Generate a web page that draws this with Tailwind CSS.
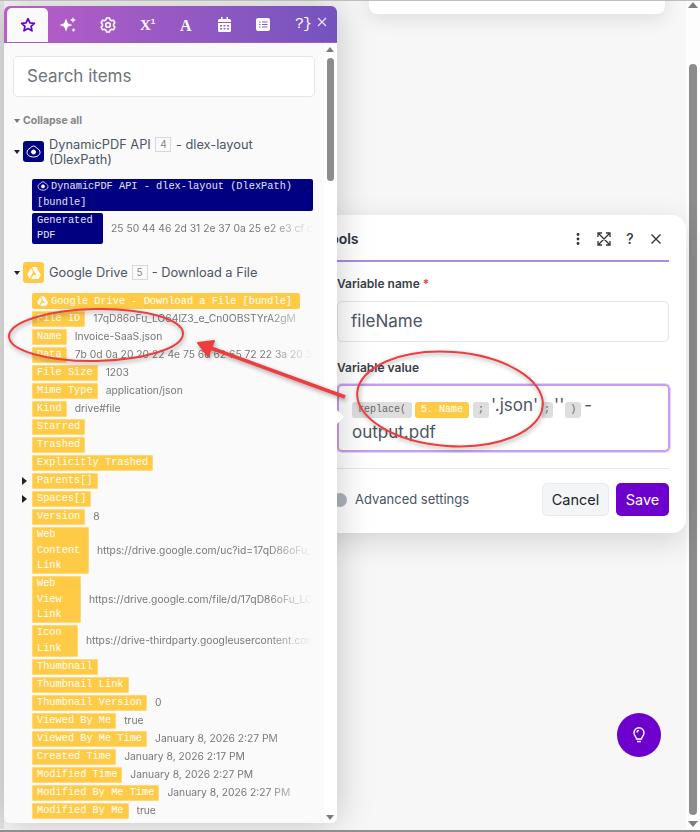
<!DOCTYPE html>
<html lang="en">
<head>
    <meta charset="UTF-8">
    <title>Set variable</title>
    <script src="https://cdn.jsdelivr.net/npm/@tailwindcss/browser@4"></script>
</head>
<body class="bg-[#f7f7f7]">
<div class="relative w-[700px] h-[832px] overflow-hidden bg-[#f7f7f7] font-['Inter',sans-serif]">

    <!-- top card behind -->
    <div class="absolute left-[369px] top-[-20px] w-[296px] h-[34px] bg-white rounded-[8px] shadow-[0_6px_18px_rgba(0,0,0,0.10)]">
        <div class="flex gap-[23px] pl-[11px] mt-[17px]">
            <div class="w-[126px] h-[4px] rounded-b-[4px] border border-[#cfd8de]"></div>
            <div class="w-[81px] h-[4px] rounded-b-[4px] border border-[#cfd8de]"></div>
            <div class="w-[31px] h-[4px] rounded-b-[4px] border border-[#cfd8de]"></div>
        </div>
    </div>

    <!-- page scrollbar -->
    <div class="absolute right-0 top-0 bottom-0 w-[14px] bg-[#fdfdfd]">
        <div class="absolute left-[2px] top-[2px] w-0 h-0 border-x-[5px] border-x-transparent border-b-[6px] border-b-[#7d7d7d]"></div>
        <div class="absolute left-[3px] top-[64px] w-[8px] h-[751px] rounded-[4px] bg-[#8c8c8c]"></div>
        <div class="absolute left-[2px] top-[821px] w-0 h-0 border-x-[5px] border-x-transparent border-t-[6px] border-t-[#7d7d7d]"></div>
    </div>

    <!-- modal -->
    <div class="absolute left-[300px] top-[215px] w-[386px] h-[318px] bg-white rounded-[14px] shadow-[0_8px_30px_rgba(0,0,0,0.14)]">
        <div class="flex items-center h-[47px] pl-[22px] pr-[6px] mr-[17px] pt-[2px] border-b-2 border-[#a88ce0]">
            <span class="text-[14px] font-semibold text-[#2a2f36]">Tools</span>
            <div class="ml-auto flex items-center gap-[12px] text-[#2f343a]">
                <svg width="14" height="14" viewBox="0 0 14 14" fill="currentColor"><circle cx="7" cy="2.5" r="1.4"/><circle cx="7" cy="7" r="1.4"/><circle cx="7" cy="11.5" r="1.4"/></svg>
                <svg width="14" height="14" viewBox="0 0 14 14" fill="none" stroke="currentColor" stroke-width="1.3"><path d="M1 5V1h4M9 1h4v4M13 9v4H9M5 13H1V9M2 2l10 10M12 2L2 12"/></svg>
                <span class="w-[14px] text-center text-[14px] font-medium leading-none">?</span>
                <svg width="14" height="14" viewBox="0 0 14 14" fill="none" stroke="currentColor" stroke-width="1.4"><path d="M2.5 2.5l9 9M11.5 2.5l-9 9"/></svg>
            </div>
        </div>
        <div class="pl-[37px] pr-[17px]">
            <div class="mt-[14px] text-[12px] leading-[15px] font-semibold text-[#3a4048]">Variable name <span class="text-[#ef3b3b]">*</span></div>
            <div class="mt-[10px] h-[41px] border border-[#e3e5e8] rounded-[5px] flex items-center px-[13px] text-[17px] text-[#4b5563]">fileName</div>
            <div class="mt-[18px] text-[12px] leading-[15px] font-semibold text-[#3a4048]">Variable value</div>
            <div class="mt-[9px] h-[68px] -mr-[1px] border-2 border-[#c79df0] rounded-[5px] shadow-[0_0_0_1px_#e6d5f8] px-[13px] pt-[6px] text-[17px] leading-[27px] text-[#4b5563]">
                <span class="inline-block align-[-1px] h-[16px] px-[6px] mr-[3px] rounded-[3px] bg-[#dedede] font-['Liberation_Mono',monospace] text-[10px] leading-[16px] text-[#666]">replace(</span><span class="inline-block align-[-1px] h-[16px] px-[6px] mr-[4px] rounded-[3px] bg-[#ffcb47] font-['Liberation_Mono',monospace] text-[10px] leading-[16px] text-white">5. Name</span><span class="inline-block align-[-1px] h-[16px] px-[5px] mr-[2px] rounded-[3px] bg-[#dedede] font-['Liberation_Mono',monospace] text-[10px] leading-[16px] text-[#666]">;</span>'.json'<span class="inline-block align-[-1px] h-[16px] px-[3px] ml-[3px] mr-[1px] rounded-[3px] bg-[#dedede] font-['Liberation_Mono',monospace] text-[10px] leading-[16px] text-[#666]">;</span>''<span class="inline-block align-[-1px] h-[16px] px-[5px] ml-[1px] mr-[3px] rounded-[3px] bg-[#dedede] font-['Liberation_Mono',monospace] text-[10px] leading-[16px] text-[#666]">)</span>-<br>output.pdf
            </div>
            <div class="mt-[16px] border-t border-[#e5e7eb]"></div>
            <div class="mt-[14px] flex items-center">
                <span class="-ml-[4px] w-[14px] h-[14px] rounded-full bg-[#adb5bd]"></span>
                <span class="ml-[8px] text-[13px] text-[#4b5563]">Advanced settings</span>
                <span class="ml-auto h-[33px] w-[67px] flex items-center justify-center rounded-[5px] bg-[#f3f5f7] border border-[#e8ebee] text-[14.5px] text-[#212529]">Cancel</span>
                <span class="ml-[7px] h-[33px] w-[53px] flex items-center justify-center rounded-[5px] bg-[#6d00cc] text-[14.5px] text-white">Save</span>
            </div>
        </div>
    </div>

    <!-- help button -->
    <div class="absolute left-[617px] top-[713px] w-[44px] h-[44px] rounded-full bg-[#6d00cc] flex items-center justify-center">
        <svg width="16" height="18" viewBox="0 0 16 18" fill="none" stroke="white" stroke-width="1.4"><path d="M5.5 13c0-2-2.5-3-2.5-6.2a5 5 0 0 1 10 0C13 10 10.500 11 10.500 13zM6 15.500h4"/><path d="M6 6.500A2 2 0 0 1 8 4.500"/></svg>
    </div>

    <!-- items panel -->
    <div class="absolute left-0 top-0 h-[829px] w-[4px] bg-[#e4e4e4]"></div>
    <div class="absolute left-[4px] top-[6px] w-[333px] h-[817px] bg-[#fafafa] rounded-[6px] overflow-hidden shadow-[0_0_36px_rgba(0,0,0,0.22)]">
        <!-- tabs -->
        <div class="relative flex items-end h-[37px] pl-[3px] bg-linear-to-r from-[#bb5dc7] to-[#7453bf] border-b border-[#a45cc4]">
            <div class="w-[41px] h-[34px] bg-[#fafafa] rounded-t-[5px] flex items-center justify-center">
                <svg width="16" height="16" viewBox="0 0 24 24" fill="none" stroke="#6d00cc" stroke-width="2.600" stroke-linejoin="round"><path d="M12 2.500l2.900 6.200 6.700.8-5 4.600 1.400 6.700L12 17.400l-6 3.400 1.400-6.700-5-4.600 6.700-.8z"/></svg>
            </div>
            <div class="absolute left-0 top-0 bottom-0 right-0 text-white">
                <svg class="absolute left-[55px] top-[11px]" width="18" height="16" viewBox="0 0 18 16" fill="white"><path d="M7 1.500l1.800 4.700 4.700 1.800-4.700 1.800L7 14.500 5.200 9.800.5 8l4.700-1.800z"/><path d="M14 0l.9 2.100 2.100.9-2.100.9-.9 2.100-.9-2.100-2.100-.9 2.100-.9zM14.500 11l.7 1.300 1.300.7-1.300.7-.7 1.300-.7-1.300-1.300-.7 1.300-.7z"/></svg>
                <svg class="absolute left-[96px] top-[11px]" width="16" height="16" viewBox="0 0 16 16" fill="none" stroke="white" stroke-width="1.600" stroke-linejoin="round"><path d="M6.500 1h3l.5 1.800 1.600.9 1.800-.5 1.500 2.600-1.300 1.300v1.800l1.300 1.300-1.500 2.600-1.800-.5-1.600.9-.5 1.800h-3L6 13.200l-1.600-.9-1.800.5-1.500-2.600 1.300-1.300V7.100L1.100 5.800l1.500-2.600 1.800.5L6 2.800z"/><circle cx="8" cy="8" r="2.300"/></svg>
                <span class="absolute left-[136px] top-[9px] text-[15px] leading-[20px] font-['Liberation_Serif',serif] font-bold">X<sup class="text-[8px] top-[-6px] font-['Liberation_Sans',sans-serif]">1</sup></span>
                <span class="absolute left-[176px] top-[10px] text-[16px] leading-[20px] font-['Liberation_Serif',serif] font-bold">A</span>
                <svg class="absolute left-[214px] top-[11px]" width="13" height="15" viewBox="0 0 13 15" fill="white"><path d="M3 0h1.500v2h4V0H10v2h1.500A1.500 1.500 0 0 1 13 3.500V5H0V3.500A1.500 1.500 0 0 1 1.500 2H3zM0 6h13v7.500a1.500 1.500 0 0 1-1.500 1.500h-10A1.500 1.500 0 0 1 0 13.500z"/><path d="M2 8h2v1.500H2zM5.500 8h2v1.500h-2zM9 8h2v1.500H9zM2 11h2v1.500H2zM5.500 11h2v1.500h-2zM9 11h2v1.500H9z" fill="#9a63c8"/></svg>
                <svg class="absolute left-[252px] top-[12px]" width="14" height="13" viewBox="0 0 14 13" fill="white"><rect width="14" height="13" rx="2"/><path d="M3 3.500h1.500v1H3zM6 3.500h5.500v1H6zM3 6h1.500v1H3zM6 6h5.500v1H6zM3 8.500h1.500v1H3zM6 8.500h5.500v1H6z" fill="#8a5ac5"/></svg>
                <span class="absolute left-[291px] top-[10px] text-[15px] leading-[18px] font-['Liberation_Mono',monospace] tracking-[-1px]">?}</span>
                <svg class="absolute left-[313px] top-[11px]" width="10" height="10" viewBox="0 0 10 10" fill="none" stroke="white" stroke-opacity="0.85" stroke-width="1.200"><path d="M1 1l8 8M9 1l-8 8"/></svg>
            </div>
        </div>

        <!-- search -->
        <div class="ml-[9px] mt-[13px] w-[302px] h-[41px] bg-white border border-[#e3e5e8] rounded-[5px] flex items-center px-[13px] text-[17px] text-[#6c757d]">Search items</div>

        <div class="ml-[10px] mt-[17px] flex items-center text-[10.500px] leading-[14px] font-bold text-[#868686]">
            <span class="w-0 h-0 border-x-[3px] border-x-transparent border-t-[4px] border-t-[#777] mr-[3px]"></span>Collapse all
        </div>

        <!-- dynamicpdf module -->
        <div class="relative mt-[9px] pl-[45px] pr-[20px] text-[12.800px] leading-[15px] text-[#4b5563] h-[30px]">
            <span class="absolute left-[10px] top-[13px] w-0 h-0 border-x-[3.500px] border-x-transparent border-t-[4px] border-t-[#222]"></span>
            <span class="absolute left-[19px] top-[4px] w-[21px] h-[21px] rounded-[3px] bg-[#000080] flex items-center justify-center">
                <svg width="15" height="13" viewBox="0 0 15 13" fill="none" stroke="white" stroke-width="1"><path d="M7.500 1a3.500 3.500 0 0 1 3.200 2.200c2 .7 3.300 2.200 3.300 4.300 0 2.600-3 4.500-6.500 4.500S1 10.100 1 7.500c0-2.100 1.300-3.600 3.300-4.300A3.500 3.500 0 0 1 7.500 1z"/><circle cx="7.500" cy="7" r="2" fill="white"/></svg>
            </span>
            DynamicPDF API <span class="inline-block w-[16px] h-[15px] border border-[#d8d8d8] text-center text-[10px] leading-[13px] text-[#888] align-[1px] mx-[1px]">4</span> - dlex-layout<br>(DlexPath)
        </div>

        <div class="ml-[28px] mt-[12px] w-[281px] bg-[#000080] rounded-[2px] px-[5px] pb-[0.5px] font-['Liberation_Mono',monospace] text-[10.300px] leading-[15.500px] text-[#e4e4f5]">
            <svg class="inline-block align-[-2px] mr-[2px]" width="12" height="10" viewBox="0 0 15 13" fill="none" stroke="white" stroke-width="1"><path d="M7.500 1a3.500 3.500 0 0 1 3.200 2.200c2 .7 3.300 2.200 3.300 4.300 0 2.600-3 4.500-6.500 4.500S1 10.100 1 7.500c0-2.100 1.300-3.600 3.300-4.300A3.500 3.500 0 0 1 7.500 1z"/><circle cx="7.500" cy="7" r="2" fill="white"/></svg>DynamicPDF API - dlex-layout (DlexPath) [bundle]
        </div>
        <div class="flex items-center ml-[28px] mt-[2px] w-[281px]">
            <span class="shrink-0 w-[71px] bg-[#000080] rounded-[2px] px-[5px] pb-[0.5px] font-['Liberation_Mono',monospace] text-[10.300px] leading-[15.500px] text-[#e4e4f5]">Generated PDF</span>
            <span class="ml-[8px] min-w-0 flex-1 overflow-hidden whitespace-nowrap text-[10.300px] text-[#777] [mask-image:linear-gradient(to_left,transparent,black_45px)]">25 50 44 46 2d 31 2e 37 0a 25 e2 e3 cf d3 0a 25 25</span>
        </div>

        <!-- google drive module -->
        <div class="relative mt-[18px] pl-[45px] pr-[20px] h-[21px] flex items-center text-[12.800px] text-[#4b5563]">
            <span class="absolute left-[10px] top-[9px] w-0 h-0 border-x-[3.500px] border-x-transparent border-t-[4px] border-t-[#222]"></span>
            <span class="absolute left-[19px] top-0 w-[21px] h-[21px] rounded-[3px] bg-[#ffcb47] flex items-center justify-center">
                <svg width="14" height="12" viewBox="0 0 14 12" fill="white"><path d="M4.800 0h4.400l4.700 8h-4.400zM4 1.300l2.200 3.800L2.500 11.500.2 7.700zM6.200 8.200h7.500L11.500 12H4z"/></svg>
            </span>
            Google Drive <span class="inline-block w-[16px] h-[15px] border border-[#d8d8d8] text-center text-[10px] leading-[13px] text-[#888] mx-[4px]">5</span> - Download a File
        </div>

        <div id="fields" class="ml-[28px] mt-[10px] w-[281px] flex flex-col items-start gap-[2px]">
            <div class="w-[268px] h-[16px] bg-[#ffcb47] rounded-[2px] px-[5px] flex items-center whitespace-nowrap font-['Liberation_Mono',monospace] text-[10.300px] leading-[15px] text-white">
                <svg class="mr-[3px]" width="11" height="10" viewBox="0 0 14 12" fill="white"><path d="M4.800 0h4.400l4.700 8h-4.400zM4 1.300l2.200 3.800L2.500 11.500.2 7.700zM6.200 8.200h7.500L11.500 12H4z"/></svg>Google Drive - Download a File [bundle]
            </div>
        </div>

        <!-- panel scrollbar -->
        <div class="absolute right-0 top-[37px] bottom-0 w-[13px] bg-white">
            <div class="absolute left-[2px] top-[4px] w-0 h-0 border-x-[4px] border-x-transparent border-b-[5px] border-b-[#7d7d7d]"></div>
            <div class="absolute left-[2.500px] top-[15px] w-[7px] h-[123px] rounded-[4px] bg-[#8c8c8c]"></div>
            <div class="absolute left-[2px] bottom-[3px] w-0 h-0 border-x-[4px] border-x-transparent border-t-[5px] border-t-[#7d7d7d]"></div>
        </div>
    </div>

    <!-- panel pointer -->
    <div class="absolute left-[332px] top-[412px] w-[10px] h-[10px] rotate-45 bg-white"></div>

    <!-- window edges -->
    <div class="absolute left-0 right-0 top-0 h-px bg-[#bdbdbd]"></div>
    <div class="absolute left-0 right-0 bottom-0 h-[2px] bg-[#8f8f8f]"></div>

    <!-- annotations -->
    <svg class="absolute left-0 top-0 pointer-events-none drop-shadow-[1px_2px_2px_rgba(0,0,0,0.35)]" width="700" height="832" fill="none" stroke="#ee3d3d" stroke-width="2">
        <ellipse cx="96" cy="335" rx="87" ry="26" transform="rotate(-1 96 335)"/>
        <ellipse cx="450" cy="399" rx="93" ry="47" transform="rotate(4 450 399)"/>
        <path d="M345 397L208 347" stroke-width="3.500"/>
        <path d="M198 343l16-2-6 15z" fill="#ee3d3d" stroke-linejoin="round"/>
    </svg>
</div>

<script>
    // name, value, has caret, fixed tag width
    const fields = [
        ["File ID", "17qD86oFu_LO64lZ3_e_Cn0OBSTYrA2gM"],
        ["Name", "Invoice-SaaS.json"],
        ["Data", "7b 0d 0a 20 20 22 4e 75 6d 62 65 72 22 3a 20 31 32"],
        ["File Size", "1203"],
        ["Mime Type", "application/json"],
        ["Kind", "drive#file"],
        ["Starred", ""],
        ["Trashed", ""],
        ["Explicitly Trashed", ""],
        ["Parents[]", "", true],
        ["Spaces[]", "", true],
        ["Version", "8"],
        ["Web<br>Content<br>Link", "https://drive.google.com/uc?id=17qD86oFu_LO64lZ3_e_Cn0OBSTYrA2gM", false, "w-[57px]"],
        ["Web<br>View<br>Link", "https://drive.google.com/file/d/17qD86oFu_LO64lZ3_e_Cn0OBSTYrA2gM", false, "w-[49px]"],
        ["Icon<br>Link", "https://drive-thirdparty.googleusercontent.com/16/type/application/json", false, "w-[46px]"],
        ["Thumbnail", ""],
        ["Thumbnail Link", ""],
        ["Thumbnail Version", "0"],
        ["Viewed By Me", "true"],
        ["Viewed By Me Time", "January 8, 2026 2:27 PM"],
        ["Created Time", "January 8, 2026 2:17 PM"],
        ["Modified Time", "January 8, 2026 2:27 PM"],
        ["Modified By Me Time", "January 8, 2026 2:27 PM"],
        ["Modified By Me", "true"]
    ];

    const list = document.getElementById("fields");
    fields.forEach(function (field) {
        const caret = field[2] ? '<span class="absolute left-[-10px] top-[4px] w-0 h-0 border-y-[4px] border-y-transparent border-l-[5px] border-l-[#222]"></span>' : '';
        const value = field[1] ? '<span class="ml-[8px] min-w-0 flex-1 overflow-hidden whitespace-nowrap text-[10.300px] text-[#777] [mask-image:linear-gradient(to_left,transparent,black_45px)]">' + field[1] + '</span>' : '';
        list.insertAdjacentHTML("beforeend",
            '<div class="relative flex items-center w-full">' + caret +
            '<span class="shrink-0 ' + (field[3] || '') + ' bg-[#ffcb47] shadow-[inset_0_0_0_1px_#ffd977] rounded-[2px] px-[5px] pb-[0.5px] font-[\'Liberation_Mono\',monospace] text-[10.300px] leading-[15.500px] text-white">' + field[0] + '</span>' +
            value + '</div>');
    });
</script>
</body>
</html>
